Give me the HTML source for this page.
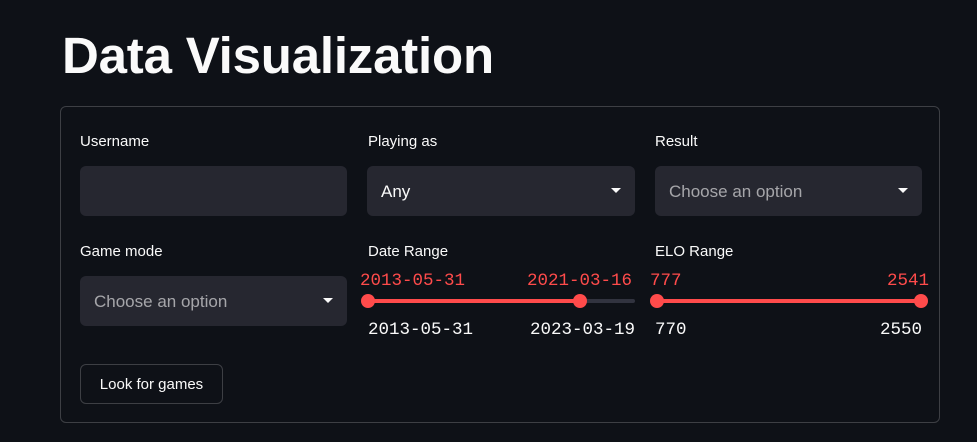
<!DOCTYPE html>
<html><head><style>
body{margin:0;background:#0e1117;width:977px;height:442px;overflow:hidden;font-family:"Liberation Sans",sans-serif;color:#fafafa;position:relative}
.a{position:absolute}
h1{position:absolute;left:62px;top:24px;margin:0;font-size:51px;font-weight:bold;line-height:64px;letter-spacing:-0.2px}
.box{left:60px;top:106px;width:878px;height:315px;border:1px solid rgba(250,250,250,0.2);border-radius:6px}
.lbl{font-size:15px;line-height:20px}
.in{background:#262730;border-radius:6px;height:50px;width:267px}
.sel{font-size:17px;line-height:51px;padding-left:14px;box-sizing:border-box;color:#fafafa}
.ph{color:rgba(250,250,250,0.6)}
.car{position:absolute;right:14px;top:22px;width:0;height:0;border-left:5px solid transparent;border-right:5px solid transparent;border-top:5px solid #fafafa}
.mono{font-family:"Liberation Mono",monospace;font-size:17.5px;line-height:20px}
.red{color:#ff4b4b}
.tr{height:4px;border-radius:2px}
.th{width:14px;height:14px;border-radius:50%;background:#ff4b4b}
.btn{left:80px;top:364px;width:141px;height:38px;border:1px solid rgba(250,250,250,0.2);border-radius:6px;font-size:15px;line-height:39px;text-align:center}
</style></head><body>
<h1>Data Visualization</h1>
<div class="a box"></div>
<div class="a lbl" style="left:80px;top:132px">Username</div>
<div class="a lbl" style="left:368px;top:132px">Playing as</div>
<div class="a lbl" style="left:655px;top:132px">Result</div>
<div class="a in" style="left:80px;top:166px"></div>
<div class="a in sel" style="left:367px;top:166px;width:268px">Any<span class="car"></span></div>
<div class="a in sel ph" style="left:655px;top:166px">Choose an option<span class="car"></span></div>
<div class="a lbl" style="left:80px;top:242px">Game mode</div>
<div class="a lbl" style="left:368px;top:242px">Date Range</div>
<div class="a lbl" style="left:655px;top:242px">ELO Range</div>
<div class="a in sel ph" style="left:80px;top:276px">Choose an option<span class="car"></span></div>
<div class="a mono red" style="left:360px;top:271px">2013-05-31</div>
<div class="a mono red" style="left:527px;top:271px">2021-03-16</div>
<div class="a tr" style="left:368px;top:299px;width:267px;background:#31333f"></div>
<div class="a tr" style="left:368px;top:299px;width:212px;background:#ff4b4b"></div>
<div class="a th" style="left:361px;top:294px"></div>
<div class="a th" style="left:573px;top:294px"></div>
<div class="a mono" style="left:368px;top:320px">2013-05-31</div>
<div class="a mono" style="left:530px;top:320px">2023-03-19</div>
<div class="a mono red" style="left:650px;top:271px">777</div>
<div class="a mono red" style="left:887px;top:271px">2541</div>
<div class="a tr" style="left:657px;top:299px;width:264px;background:#ff4b4b"></div>
<div class="a th" style="left:650px;top:294px"></div>
<div class="a th" style="left:914px;top:294px"></div>
<div class="a mono" style="left:655px;top:320px">770</div>
<div class="a mono" style="left:880px;top:320px">2550</div>
<div class="a btn">Look for games</div>
</body></html>
